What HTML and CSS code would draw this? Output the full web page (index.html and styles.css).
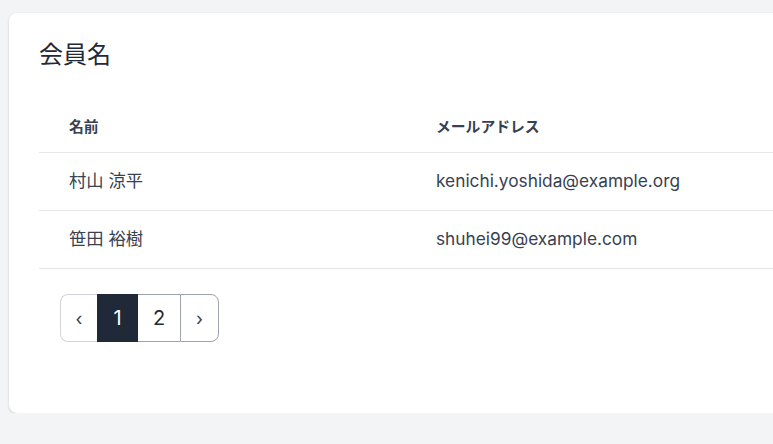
FILE: index.html
```html
<!DOCTYPE html>
<html lang="ja">
<head>
<meta charset="utf-8">
<title>会員名</title>
<link rel="stylesheet" href="styles.css">
</head>
<body>
<div class="page">
  <section class="card">
    <h1 class="title">会員名</h1>
    <table class="members">
      <thead>
        <tr><th class="col-name">名前</th><th>メールアドレス</th></tr>
      </thead>
      <tbody>
        <tr><td>村山 涼平</td><td>kenichi.yoshida@example.org</td></tr>
        <tr><td>笹田 裕樹</td><td>shuhei99@example.com</td></tr>
      </tbody>
    </table>
    <nav class="pager">
      <a class="pg pg-prev">‹</a>
      <a class="pg pg-active">1</a>
      <a class="pg pg-num">2</a>
      <a class="pg pg-next">›</a>
    </nav>
  </section>
</div>
</body>
</html>
```
FILE: styles.css
```css
html, body {
  margin: 0;
  padding: 0;
  background: #f3f4f6;
  overflow: hidden;
  font-family: Inter, "Noto Sans CJK JP", sans-serif;
  color: #374151;
}
.page {
  padding: 13px 0 0 9px;
}
.card {
  width: 1000px;
  height: 400px;
  box-sizing: border-box;
  background: #fff;
  border-radius: 8px;
  box-shadow: 0 1px 3px rgba(0,0,0,0.12), 0 1px 2px rgba(0,0,0,0.06);
  padding: 23px 30px 30px 30px;
}
.title {
  margin: 0 0 30px 0;
  font-family: "Noto Sans CJK JP", sans-serif;
  font-weight: 400;
  font-size: 24px;
  line-height: 33px;
  color: #1f2937;
}
.members {
  border-collapse: collapse;
  width: 100%;
}
.members th {
  text-align: left;
  font-family: Inter, "Noto Sans CJK JP", sans-serif;
  font-weight: 700;
  font-size: 14.8px;
  line-height: 20px;
  color: #374151;
  padding: 18px 30px 15px 30px;
  border-bottom: 1px solid #e5e7eb;
}
.members .col-name {
  width: 307px;
}
.members td {
  font-size: 17.3px;
  line-height: 24px;
  padding: 16px 30px 17px 30px;
  border-bottom: 1px solid #e5e7eb;
  color: #374151;
}
.pager {
  display: flex;
  margin: 25px 0 0 21px;
  height: 48px;
}
.pg {
  display: flex;
  align-items: center;
  justify-content: center;
  box-sizing: border-box;
  height: 48px;
  font-size: 20px;
  color: #1f2937;
  text-decoration: none;
}
.pg-prev {
  width: 37px;
  border: 1px solid #d1d5db;
  border-right: none;
  border-radius: 8px 0 0 8px;
  font-size: 18px;
  color: #374151;
}
.pg-active {
  width: 41px;
  background: #1f2937;
  color: #fff;
}
.pg-num {
  width: 42px;
  border-top: 1px solid #9ca3af;
  border-bottom: 1px solid #9ca3af;
}
.pg-next {
  width: 39px;
  border: 1px solid #9ca3af;
  border-radius: 0 8px 8px 0;
  font-size: 18px;
  color: #374151;
}
```
